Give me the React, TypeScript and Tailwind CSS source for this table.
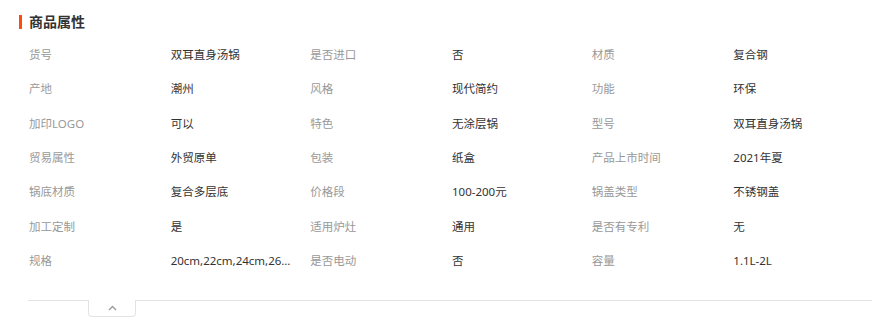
import React from "react";

const rows: [string, string][] = [
  ["货号", "双耳直身汤锅"],
  ["是否进口", "否"],
  ["材质", "复合钢"],
  ["产地", "潮州"],
  ["风格", "现代简约"],
  ["功能", "环保"],
  ["加印LOGO", "可以"],
  ["特色", "无涂层锅"],
  ["型号", "双耳直身汤锅"],
  ["贸易属性", "外贸原单"],
  ["包装", "纸盒"],
  ["产品上市时间", "2021年夏"],
  ["锅底材质", "复合多层底"],
  ["价格段", "100-200元"],
  ["锅盖类型", "不锈钢盖"],
  ["加工定制", "是"],
  ["适用炉灶", "通用"],
  ["是否有专利", "无"],
  ["规格", "20cm,22cm,24cm,26cm,28cm"],
  ["是否电动", "否"],
  ["容量", "1.1L-2L"],
];

const App = () => {
  return (
    <div
      className="w-[884px] h-[322px] bg-white pt-[15px] overflow-hidden"
      style={{ fontFamily: '"Noto Sans", "Noto Sans CJK SC", sans-serif' }}
    >
      {/* title */}
      <div className="flex items-center gap-[7px] pl-[19px] h-[14px]">
        <div className="w-[3px] h-[14px] bg-[#ff4c0a]"></div>
        <h2 className="text-[14px] leading-[14px] font-bold text-[#333]">商品属性</h2>
      </div>

      <div className="ml-[28px] mr-[12px] mt-[9px]">
        <div className="grid grid-cols-6 auto-rows-[34.33px] items-center text-[11.5px] leading-[20px]">
          {rows.map(([label, value], i) => (
            <React.Fragment key={i}>
              <div className="pl-px text-[#999] truncate">{label}</div>
              <div className="pl-[2px] pr-[18px] text-[#333] truncate">{value}</div>
            </React.Fragment>
          ))}
        </div>

        {/* fold bar */}
        <div className="flex mt-[22px]">
          <div className="w-[60px] border-t border-[#e3e3e3]"></div>
          <button className="w-[48px] h-[17px] border border-t-0 border-[#e3e3e3] rounded-b-[4px] flex items-center justify-center bg-white">
            <svg width="9" height="6" viewBox="0 0 9 6" fill="none">
              <path d="M1 5 L4.5 1.5 L8 5" stroke="#999" strokeWidth="1.3" />
            </svg>
          </button>
          <div className="flex-1 border-t border-[#e3e3e3]"></div>
        </div>
      </div>
    </div>
  );
};

export default App;
